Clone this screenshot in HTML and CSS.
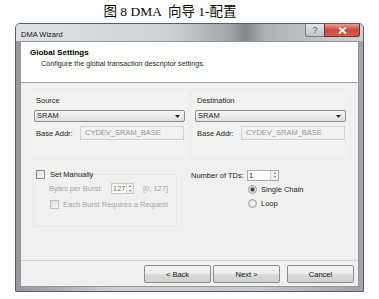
FILE: index.html
```html
<!DOCTYPE html>
<html lang="en">

<head>
    <meta charset="UTF-8">
    <title>DMA Wizard</title>
    <link rel="stylesheet" href="styles.css">
</head>

<body>
    <div class="caption">图 8 DMA &nbsp;向导 1-配置</div>
    <div class="window">
        <div class="titleBar">
            <span class="titleText">DMA Wizard</span>
            <div class="captionBttns">
                <span class="bttnHelp">?</span>
                <span class="bttnClose">
                    <svg width="9" height="7" viewBox="0 0 9 7">
                        <path d="M1 0.5 L8 6.5 M8 0.5 L1 6.5" stroke="#fff" stroke-width="1.8" />
                    </svg>
                </span>
            </div>
        </div>
        <div class="client">
            <div class="header">
                <div class="headerTitle">Global Settings</div>
                <div class="headerSub">Configure the global transaction descriptor settings.</div>
            </div>
            <div class="content">
                <div class="addrRow">
                    <div class="panel">
                        <div class="lbl">Source</div>
                        <div class="select">SRAM
                            <svg width="5" height="3" viewBox="0 0 5 3"><path d="M0 0 H5 L2.5 3 Z" fill="#222" /></svg>
                        </div>
                        <div class="fieldRow">
                            <span class="fieldLbl">Base Addr:</span>
                            <div class="input">CYDEV_SRAM_BASE</div>
                        </div>
                    </div>
                    <div class="panel">
                        <div class="lbl">Destination</div>
                        <div class="select">SRAM
                            <svg width="5" height="3" viewBox="0 0 5 3"><path d="M0 0 H5 L2.5 3 Z" fill="#222" /></svg>
                        </div>
                        <div class="fieldRow">
                            <span class="fieldLbl">Base Addr:</span>
                            <div class="input">CYDEV_SRAM_BASE</div>
                        </div>
                    </div>
                </div>
                <div class="optsRow">
                    <div class="manual">
                        <div class="checkRow">
                            <span class="check"></span>
                            <span>Set Manually</span>
                        </div>
                        <div class="manualBox">
                            <div class="burstRow">
                                <span class="burstLbl">Bytes per Burst:</span>
                                <div class="spin spinSmall">
                                    <span class="spinVal">127</span>
                                    <span class="spinBttns"><i>▴</i><i>▾</i></span>
                                </div>
                                <span class="range">[0, 127]</span>
                            </div>
                            <div class="checkRow disabled">
                                <span class="check"></span>
                                <span>Each Burst Requires a Request</span>
                            </div>
                        </div>
                    </div>
                    <div class="tds">
                        <div class="tdsRow">
                            <span class="tdsLbl">Number of TDs:</span>
                            <div class="spin spinTds">
                                <span class="spinVal">1</span>
                                <span class="spinBttns"><i>▴</i><i>▾</i></span>
                            </div>
                        </div>
                        <div class="radioRow"><span class="radio on"></span>Single Chain</div>
                        <div class="radioRow"><span class="radio"></span>Loop</div>
                    </div>
                </div>
            </div>
            <div class="footer">
                <button class="bttn">&lt; Back</button>
                <button class="bttn">Next &gt;</button>
                <button class="bttn bttnCancel">Cancel</button>
            </div>
        </div>
    </div>
</body>

</html>
```

FILE: styles.css
```css
body {
    margin: 0;
    background-color: rgb(255, 255, 255);
    font-family: "Liberation Sans", Arial, sans-serif;
    font-size: 7.5px;
    color: rgb(30, 30, 30);
}

.caption {
    height: 23px;
    line-height: 23px;
    padding-right: 39px;
    text-align: center;
    font-family: "Liberation Serif", "Noto Sans CJK SC", serif;
    font-size: 13.5px;
    color: rgb(10, 10, 10);
}

.window {
    margin-left: 15px;
    width: 339px;
    height: 263px;
    padding: 0 4px 4px 4px;
    border: 1px solid rgb(90, 94, 98);
    border-radius: 5px 5px 1px 1px;
    background: linear-gradient(90deg, rgb(150, 154, 158), rgb(205, 208, 212) 30%, rgb(196, 199, 203) 70%, rgb(160, 163, 167));
    display: flex;
    flex-direction: column;
}

.titleBar {
    height: 17px;
    margin: 0 -4px;
    padding: 0 3px 0 4px;
    display: flex;
    align-items: flex-start;
    justify-content: space-between;
    border-radius: 4px 4px 0 0;
    background: linear-gradient(90deg, rgb(222, 226, 231) 0%, rgb(205, 209, 214) 45%, rgb(160, 164, 168) 62%, rgb(130, 133, 137) 66%, rgb(175, 179, 183) 72%, rgb(205, 209, 213) 100%);
}

.titleText {
    margin-top: 6px;
    margin-left: 1px;
    font-size: 7.5px;
    color: rgb(20, 20, 20);
}

.captionBttns {
    display: flex;
}

.bttnHelp {
    width: 18px;
    height: 12px;
    line-height: 12px;
    text-align: center;
    font-size: 9px;
    color: rgb(70, 80, 90);
    border: 1px solid rgb(120, 124, 130);
    border-right: none;
    border-top: none;
    border-radius: 0 0 0 3px;
    background: linear-gradient(rgb(226, 230, 235), rgb(190, 195, 200));
}

.bttnClose {
    width: 34px;
    height: 12px;
    display: flex;
    align-items: center;
    justify-content: center;
    border: 1px solid rgb(110, 50, 45);
    border-top: none;
    border-radius: 0 0 3px 0;
    background: linear-gradient(rgb(230, 160, 150), rgb(200, 75, 60) 50%, rgb(215, 95, 75));
}

.client {
    flex: 1;
    display: flex;
    flex-direction: column;
    background-color: rgb(240, 240, 240);
    border: 1px solid rgb(150, 150, 150);
}

.header {
    height: 41px;
    padding: 6px 0 0 9px;
    box-sizing: border-box;
    background-color: rgb(255, 255, 255);
    border-bottom: 1px solid rgb(160, 160, 160);
}

.headerTitle {
    font-weight: 700;
    font-size: 8px;
    color: rgb(0, 0, 0);
}

.headerSub {
    margin-top: 2px;
    padding-left: 11px;
    font-size: 7.2px;
    color: rgb(30, 30, 30);
}

.content {
    flex: 1;
    padding: 7px 10px 0 9px;
}

.addrRow {
    display: grid;
    grid-template-columns: 159px 159px;
    gap: 2px;
}

.panel {
    height: 69px;
    box-sizing: border-box;
    padding: 4px 3px 0 3px;
    border: 1px solid rgb(236, 236, 236);
    background-color: rgb(242, 242, 242);
}

.lbl {
    padding-left: 2px;
    height: 11px;
    line-height: 11px;
    margin-bottom: 4px;
}

.select {
    height: 10px;
    line-height: 10px;
    padding: 0 4px 0 2px;
    display: flex;
    justify-content: space-between;
    align-items: center;
    border: 1px solid rgb(140, 140, 140);
    border-radius: 2px;
    background: linear-gradient(rgb(246, 246, 246), rgb(224, 224, 224));
}

.fieldRow {
    margin-top: 4px;
    display: flex;
    align-items: center;
}

.fieldLbl {
    width: 44px;
    padding-left: 2px;
}

.input {
    flex: 1;
    height: 12px;
    line-height: 12px;
    padding-left: 4px;
    margin-right: 1px;
    border: 1px solid rgb(210, 210, 210);
    background-color: rgb(242, 242, 242);
    color: rgb(150, 150, 150);
}

.optsRow {
    margin-top: 11px;
    display: flex;
}

.manual {
    width: 144px;
    margin-left: 3px;
    position: relative;
}

.manual > .checkRow {
    position: relative;
    z-index: 1;
    padding-left: 3px;
}

.manualBox {
    margin-top: -5px;
    height: 43px;
    padding: 8px 0 0 15px;
    border: 1px solid rgb(230, 230, 230);
}

.checkRow {
    display: flex;
    align-items: center;
    height: 9px;
}

.check {
    width: 7px;
    height: 7px;
    margin-right: 5px;
    border: 1px solid rgb(140, 140, 140);
    background: linear-gradient(135deg, rgb(220, 220, 220), rgb(250, 250, 250));
}

.disabled {
    color: rgb(165, 165, 165);
    margin-top: 6px;
    margin-left: 1px;
}

.disabled .check {
    border-color: rgb(190, 190, 190);
    margin-right: 4px;
}

.burstRow {
    display: flex;
    align-items: center;
    height: 11px;
    color: rgb(165, 165, 165);
}

.burstLbl {
    width: 62px;
}

.spin {
    height: 9px;
    display: flex;
    justify-content: space-between;
    border: 1px solid rgb(200, 200, 200);
    background-color: rgb(255, 255, 255);
}

.spinSmall {
    width: 21px;
    color: rgb(110, 110, 110);
}

.spinVal {
    padding-left: 1px;
    line-height: 9px;
}

.spinBttns {
    width: 7px;
    display: flex;
    flex-direction: column;
    border-left: 1px solid rgb(215, 215, 215);
    background-color: rgb(240, 240, 240);
}

.spinBttns i {
    flex: 1;
    font-style: normal;
    font-size: 4px;
    line-height: 4.5px;
    text-align: center;
    color: rgb(120, 120, 120);
}

.range {
    margin-left: 9px;
}

.tds {
    margin-left: 14px;
}

.tdsRow {
    display: flex;
    align-items: center;
    height: 10px;
}

.tdsLbl {
    width: 56px;
}

.spinTds {
    width: 30px;
    border-color: rgb(170, 170, 170);
}

.radioRow {
    margin-top: 4px;
    margin-left: 57px;
    height: 10px;
    display: flex;
    align-items: center;
}

.radio {
    width: 7px;
    height: 7px;
    margin-right: 4px;
    border-radius: 50%;
    border: 1px solid rgb(160, 160, 160);
    background: radial-gradient(rgb(250, 250, 250), rgb(215, 215, 215));
}

.radio.on {
    background: radial-gradient(rgb(50, 70, 90) 25%, rgb(120, 150, 175) 40%, rgb(230, 230, 230) 55%);
}

.footer {
    height: 26px;
    box-sizing: border-box;
    padding: 4px 4px 0 0;
    display: flex;
    justify-content: flex-end;
    border-top: 1px solid rgb(210, 210, 210);
}

.bttn {
    width: 67px;
    height: 18px;
    margin-left: 2px;
    padding: 0;
    font-family: "Liberation Sans", Arial, sans-serif;
    font-size: 7.5px;
    color: rgb(20, 20, 20);
    border: 1px solid rgb(140, 140, 140);
    border-radius: 2px;
    background: linear-gradient(rgb(244, 244, 244), rgb(236, 236, 236) 50%, rgb(220, 220, 220) 51%, rgb(208, 208, 208));
}

.bttnCancel {
    margin-left: 7px;
}
```
